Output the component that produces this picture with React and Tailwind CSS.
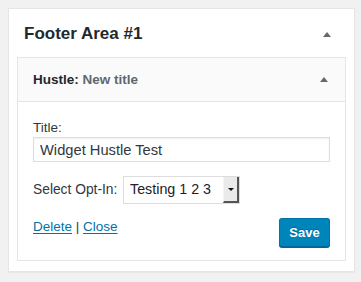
import React from 'react'

const font = { fontFamily: '"Liberation Sans", Arial, sans-serif' }

function Arrow({ className = '' }) {
  return (
    <svg width="8" height="5" viewBox="0 0 8 5" className={className} aria-hidden="true">
      <polygon points="0,5 4,0 8,5" fill="#646970" />
    </svg>
  )
}

export default function App() {
  return (
    <div style={font} className="h-[282px] w-[361px] bg-[#f1f1f1] pl-[8px] pt-[8px] text-[#32373c]">
      <div className="w-[347px] border border-[#e5e5e5] bg-white pb-[10px] shadow-[0_1px_1px_rgba(0,0,0,0.04)]">
        <div className="flex h-[48px] items-center justify-between pl-[15px] pr-[23px] pt-[2px]">
          <h2 className="text-[17px] font-bold leading-[24px] text-[#23282d]">Footer Area #1</h2>
          <Arrow />
        </div>

        <div className="mx-[8px] border border-[#e5e5e5]">
          <div className="flex h-[44px] items-center justify-between border-b border-[#e5e5e5] bg-[#fafafa] pl-[15px] pr-[17px]">
            <h3 className="text-[13.5px] font-bold leading-[18px] text-[#23282d]">
              Hustle: <span className="text-[#5f676f]">New title</span>
            </h3>
            <Arrow />
          </div>

          <div className="px-[15px] pb-[13px] pt-[17px]">
            <label className="block h-[18px] text-[13.5px] leading-[18px]">Title:</label>
            <input
              readOnly
              value="Widget Hustle Test"
              className="block h-[25px] w-full border border-[#ddd] bg-white px-[6px] text-[14.7px] text-[#32373c] shadow-[inset_0_1px_2px_rgba(0,0,0,0.07)] outline-none"
            />

            <div className="mt-[14px] flex h-[28px] items-center gap-[5px]">
              <span className="w-[85px] shrink-0 text-[13.8px] leading-[18px]">Select Opt-In:</span>
              <div className="flex h-[28px] w-[117px] items-stretch border border-[#ddd] bg-white">
                <span className="flex flex-1 items-center pl-[6px] text-[14.3px] text-[#222]">Testing 1 2 3</span>
                <span className="flex w-[16px] items-center justify-center border-b-2 border-l border-r-2 border-b-[#555] border-l-[#f4f4f4] border-r-[#555] bg-[#eaeaea]">
                  <svg width="6" height="3" viewBox="0 0 6 3" aria-hidden="true">
                    <polygon points="0,0 6,0 3,3" fill="#111" />
                  </svg>
                </span>
              </div>
            </div>

            <div className="mt-[13px] flex items-start justify-between">
              <div className="text-[13.5px] leading-[20px]">
                <a href="#" className="text-[#0073aa] underline underline-offset-[2px]">Delete</a>
                <span className="text-[#32373c]"> | </span>
                <a href="#" className="text-[#0073aa] underline underline-offset-[2px]">Close</a>
              </div>
              <button className="mt-[1px] h-[29px] w-[51px] rounded-[3px] border border-[#0073aa] border-b-[#006799] bg-[#0085ba] text-[13px] font-bold text-white shadow-[0_1px_0_#006799] [text-shadow:0_-1px_1px_#006799]">
                Save
              </button>
            </div>
          </div>
        </div>
      </div>
    </div>
  )
}
